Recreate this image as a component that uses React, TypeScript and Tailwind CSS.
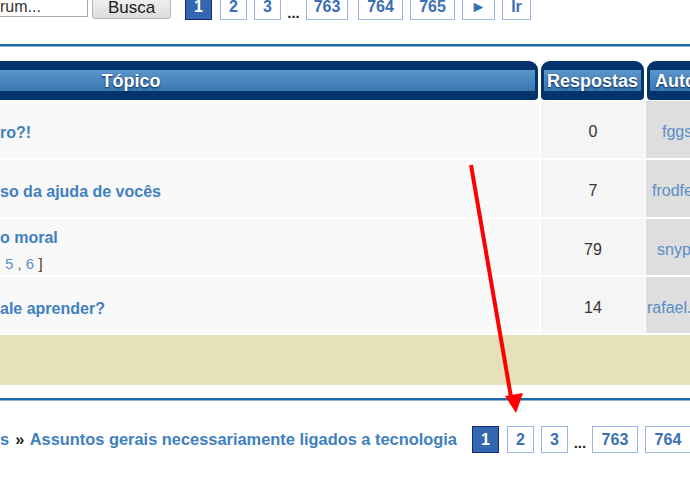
import React from "react"

const topics = [
  { title: "ro?!", pages: null, replies: "0", author: "fggs", authorPad: "pl-[16px]" },
  { title: "so da ajuda de vocês", pages: null, replies: "7", author: "frodfer", authorPad: "pl-[6px]" },
  { title: "o moral", pages: true, replies: "79", author: "snyper", authorPad: "pl-[11px]" },
  { title: "ale aprender?", pages: null, replies: "14", author: "rafael.", authorPad: "pl-[1px]" },
]

const PageBox = ({ label, w, active }: { label: string; w: string; active?: boolean }) => (
  <span
    className={`${w} h-[27px] shrink-0 flex items-center justify-center border text-[16px] font-bold ${
      active
        ? "bg-[#3368b0] border-[#14287a] text-white"
        : "bg-white border-[#9fb4ea] text-[#3b6fb6]"
    }`}
  >
    {label}
  </span>
)

const Dots = ({ w }: { w: string }) => (
  <span className={`${w} shrink-0 text-center text-[15px] font-bold text-[#222] leading-none pt-[6px]`}>...</span>
)

export default function App() {
  return (
    <div className="relative w-[690px] h-[500px] overflow-hidden bg-white font-['Liberation_Sans',Arial,sans-serif]">
      {/* search + top pagination */}
      <div className="flex items-end h-[28px] -mt-[8px]">
        <div className="-ml-px w-[89px] h-[26px] mb-[3px] shrink-0 border border-[#a9a9a9] bg-white flex items-start pt-[7px] text-[16px] text-[#333] leading-none">
          rum...
        </div>
        <button className="ml-[4px] w-[79px] h-[28px] mb-[1px] shrink-0 border border-[#b5b5b5] rounded-[3px] bg-gradient-to-b from-[#f7f7f7] to-[#dcdcdc] text-[17px] text-[#1a1a1a] leading-none pt-[4px]">
          Busca
        </button>
        <div className="ml-[14px] flex items-end">
          <PageBox label="1" w="w-[27px]" active />
          <span className="w-[8px]" />
          <PageBox label="2" w="w-[27px]" />
          <span className="w-[7px]" />
          <PageBox label="3" w="w-[27px]" />
          <Dots w="w-[25px]" />
          <PageBox label="763" w="w-[42px]" />
          <span className="w-[10px]" />
          <PageBox label="764" w="w-[45px]" />
          <span className="w-[7px]" />
          <PageBox label="765" w="w-[45px]" />
          <span className="w-[7px]" />
          <PageBox label="►" w="w-[33px]" />
          <span className="w-[7px]" />
          <PageBox label="Ir" w="w-[29px]" />
        </div>
      </div>

      <div className="mt-[24px] h-[3px] bg-[#1f6aa5] border-b border-[#8db5d6]" />

      {/* table header */}
      <div className="mt-[14px] flex gap-[3px] h-[39px]">
        {[
          { label: "Tópico", w: "w-[814px] -ml-[276px]", align: "justify-center" },
          { label: "Respostas", w: "w-[103px]", align: "justify-center" },
          { label: "Autor", w: "w-[120px]", align: "justify-start pl-[5px]" },
        ].map((h) => (
          <div key={h.label} className={`${h.w} shrink-0 bg-[#02336a] rounded-t-[9px] rounded-b-[4px] px-[3px] py-[9px]`}>
            <div
              className={`h-full flex items-center ${h.align} bg-gradient-to-b from-[#5a95cb] via-[#4a86bf] to-[#3c77b1] text-white font-bold text-[18px] leading-none whitespace-nowrap [text-shadow:0_1px_2px_#06234d]`}
            >
              {h.label}
            </div>
          </div>
        ))}
      </div>

      {/* rows */}
      <div className="mt-px flex flex-col gap-[2px]">
        {topics.map((t, i) => (
          <div key={i} className={`flex ${i > 1 ? "h-[56px]" : "h-[57px]"}`}>
            <div className="w-[539px] shrink-0 bg-[#f9f9f9] flex flex-col justify-center pt-[7px]">
              <span className="text-[16px] font-bold text-[#3f80c0] whitespace-nowrap leading-none">{t.title}</span>
              {t.pages && (
                <span className="mt-[10px] pl-[5px] text-[15px] leading-none text-[#5b8ec7] whitespace-nowrap">
                  5 <span className="text-[#666]">,</span> 6 <span className="text-[#4a3a22]">]</span>
                </span>
              )}
            </div>
            <div className="ml-[2px] w-[104px] shrink-0 bg-[#f5f5f5] flex items-center justify-center pt-[5px] text-[16px] text-[#333]">
              {t.replies}
            </div>
            <div className={`ml-px flex-1 bg-[#dedede] flex items-center pt-[5px] ${t.authorPad} text-[16px] text-[#5b8ec7] whitespace-nowrap overflow-hidden`}>
              {t.author}
            </div>
          </div>
        ))}
      </div>

      <div className="mt-[2px] h-[50px] bg-[#e6e0bb]" />

      <div className="mt-[13px] h-[3px] bg-[#1f6aa5] border-b border-[#8db5d6]" />

      {/* breadcrumb + bottom pagination */}
      <div className="mt-[25px] flex items-center h-[27px]">
        <span className="text-[16.4px] font-bold text-[#3f80c0] whitespace-nowrap">
          s <span className="px-[1.5px] text-[#222]">»</span> Assuntos gerais necessariamente ligados a tecnologia
        </span>
        <div className="ml-[15px] flex items-center">
          <PageBox label="1" w="w-[27px]" active />
          <span className="w-[8px]" />
          <PageBox label="2" w="w-[27px]" />
          <span className="w-[7px]" />
          <PageBox label="3" w="w-[27px]" />
          <Dots w="w-[24px]" />
          <PageBox label="763" w="w-[46px]" />
          <span className="w-[7px]" />
          <PageBox label="764" w="w-[46px]" />
        </div>
      </div>

      {/* red annotation arrow */}
      <svg className="absolute left-0 top-0 pointer-events-none" width="690" height="500" viewBox="0 0 690 500">
        <line x1="471" y1="165" x2="511" y2="397" stroke="#ff0000" strokeWidth="4" />
        <polygon points="505,396 523,393 516,413" fill="#ff0000" />
      </svg>
    </div>
  )
}
